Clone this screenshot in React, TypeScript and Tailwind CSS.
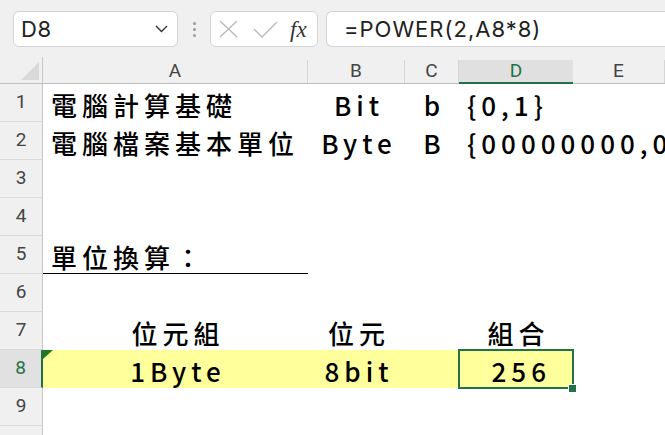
import React from 'react';

const cjk = "font-['Noto_Sans_CJK_TC','Noto_Sans_CJK_SC',sans-serif] font-medium text-[26px] tracking-[5px] text-black leading-none";
const hdr = "font-['Liberation_Sans_Narrow','Roboto',sans-serif] text-[19px] text-[#444]";

const cols = ['w-[265px]', 'w-[97px]', 'w-[54px]', 'w-[114px]', 'flex-1'];

type CellDef = { text?: string; align?: 'left' | 'center' | 'right'; extra?: string };

const Cell = ({ c, w }: { c?: CellDef; w: string }) => {
  const align =
    c?.align === 'center' ? 'justify-center pl-[5px]' : c?.align === 'right' ? 'justify-end pr-[22px]' : 'justify-start pl-[8px]';
  return (
    <div className={`${w} h-full flex items-center pt-[4px] shrink-0 ${align} ${c?.extra ?? ''}`}>
      {c?.text && <span className={`${cjk} whitespace-nowrap`}>{c.text}</span>}
    </div>
  );
};

const RowHead = ({ n, active }: { n?: number; active?: boolean }) => (
  <div
    className={`w-[43px] shrink-0 h-full flex items-center justify-center border-b border-[#dadada] ${hdr} ${
      active ? 'bg-[#e1e1e1] border-r-2 border-r-[#217346] text-[#217346]' : 'bg-[#f0f0f0] border-r border-r-[#c6c6c6]'
    }`}
  >
    {n}
  </div>
);

const App = () => {
  const rows: { n: number; cells: (CellDef | undefined)[] }[] = [
    { n: 1, cells: [{ text: '電腦計算基礎' }, { text: 'Bit', align: 'center' }, { text: 'b', align: 'center' }, { text: '{0,1}' }] },
    { n: 2, cells: [{ text: '電腦檔案基本單位' }, { text: 'Byte', align: 'center' }, { text: 'B', align: 'center' }, { text: '{00000000,0' }] },
    { n: 3, cells: [] },
    { n: 4, cells: [] },
    { n: 5, cells: [{ text: '單位換算：', extra: 'border-b border-black' }] },
    { n: 6, cells: [] },
    { n: 7, cells: [{ text: '位元組', align: 'center' }, { text: '位元', align: 'center' }, undefined, { text: '組合', align: 'center' }] },
  ];

  return (
    <div className="w-[665px] h-[435px] overflow-hidden bg-white flex flex-col">
      {/* formula bar */}
      <div className="h-[57px] shrink-0 bg-[#f0f0f0] flex items-start pt-[11px]">
        <div className="ml-[13px] w-[165px] h-[36px] bg-white border border-[#d4d4d4] rounded-md flex items-center justify-between pl-[7px] pr-[9px]">
          <span className="font-['Inter',sans-serif] text-[22px] tracking-[0.5px] text-[#222]">D8</span>
          <svg width="13" height="8" viewBox="0 0 13 8">
            <path d="M1 1 L6.5 6.5 L12 1" fill="none" stroke="#333" strokeWidth="1.4" />
          </svg>
        </div>
        <div className="w-[32px] h-[36px] flex flex-col items-center justify-center gap-[3px]">
          <div className="w-[3px] h-[3px] bg-[#999] rounded-full" />
          <div className="w-[3px] h-[3px] bg-[#999] rounded-full" />
          <div className="w-[3px] h-[3px] bg-[#999] rounded-full" />
        </div>
        <div className="w-[108px] h-[36px] bg-white border border-[#d4d4d4] rounded-md flex items-center pl-[8px]">
          <svg width="19" height="18" viewBox="0 0 19 18">
            <path d="M1 1 L18 17 M18 1 L1 17" stroke="#b8b8b8" strokeWidth="1.3" />
          </svg>
          <svg width="25" height="17" viewBox="0 0 25 17" className="ml-[15px]">
            <path d="M1 8 L9 16 L24 1" fill="none" stroke="#b8b8b8" strokeWidth="1.3" />
          </svg>
          <span className="ml-[12px] font-['Liberation_Serif',serif] italic text-[23px] text-[#333] leading-none">fx</span>
        </div>
        <div className="ml-[8px] flex-1 h-[36px] bg-white border border-r-0 border-[#d4d4d4] rounded-l-md flex items-center pl-[17px]">
          <span className="font-['Inter',sans-serif] text-[22px] text-[#222] tracking-[1px]">=POWER(2,A8*8)</span>
        </div>
      </div>

      {/* column headers */}
      <div className="h-[27px] shrink-0 bg-[#f0f0f0] flex border-b border-[#bdbdbd]">
        <div className="w-[43px] shrink-0 border-r border-[#c6c6c6] flex items-end justify-end pr-[3px] pb-[3px]">
          <svg width="18" height="18" viewBox="0 0 18 18">
            <path d="M18 0 L18 18 L0 18 Z" fill="#d9d9d9" />
          </svg>
        </div>
        {['A', 'B', 'C', 'D', 'E'].map((l, i) => (
          <div
            key={l}
            className={`${cols[i]} shrink-0 flex items-center justify-center ${hdr} ${
              l === 'D'
                ? 'bg-[#e0e0e0] border-b-2 border-[#217346] text-[#217346] mt-[3px] mb-[-1px]'
                : 'border-r border-[#d6d6d6] mt-[3px]'
            }`}
          >
            {l}
          </div>
        ))}
      </div>

      {/* grid rows */}
      {rows.map((r) => (
        <div key={r.n} className="h-[38px] shrink-0 flex">
          <RowHead n={r.n} />
          {cols.map((w, i) => (
            <Cell key={i} w={w} c={r.cells[i]} />
          ))}
        </div>
      ))}

      {/* row 8 */}
      <div className="h-[38px] shrink-0 flex">
        <RowHead n={8} active />
        <div className="relative w-[265px] shrink-0 h-full bg-[#ffff9c] flex items-center justify-center pl-[5px] pt-[4px]">
          <svg width="10" height="9" viewBox="0 0 10 9" className="absolute left-0 top-0">
            <path d="M0 0 L10 0 L0 9 Z" fill="#1e7a1e" />
          </svg>
          <span className={cjk}>1Byte</span>
        </div>
        <div className="w-[97px] shrink-0 h-full bg-[#ffff9c] flex items-center justify-center pl-[5px] pt-[4px]">
          <span className={cjk}>8bit</span>
        </div>
        <div className="w-[54px] shrink-0 h-full bg-[#ffff9c]" />
        <div className="relative w-[114px] shrink-0 h-full bg-[#ffff9c] flex items-center justify-end pr-[22px] pt-[4px]">
          <span className={cjk}>256</span>
          <div className="absolute -left-[1px] -top-[1px] -right-[1px] -bottom-[1px] border-2 border-[#217346]" />
          <div className="absolute -right-[3px] -bottom-[4px] w-[8px] h-[8px] bg-[#217346] border border-white border-r-0 border-b-0" />
        </div>
        <div className="flex-1" />
      </div>

      <div className="h-[38px] shrink-0 flex">
        <RowHead n={9} />
        <div className="flex-1" />
      </div>
      <div className="h-[38px] shrink-0 flex">
        <RowHead />
        <div className="flex-1" />
      </div>
    </div>
  );
};

export default App;
